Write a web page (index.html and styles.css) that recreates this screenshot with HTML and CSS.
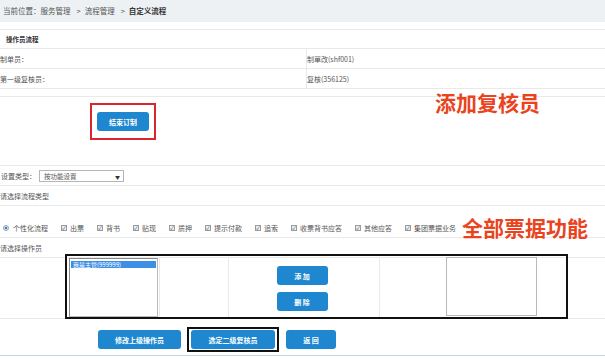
FILE: index.html
```html
<!DOCTYPE html>
<html lang="zh-CN">
<head>
    <meta charset="UTF-8">
    <title>自定义流程</title>
    <link rel="stylesheet" href="styles.css">
</head>
<body>
    <div class="page">
        <div class="crumb">当前位置：服务管理<span class="sep">&gt;</span>流程管理<span class="sep">&gt;</span><b>自定义流程</b></div>
        <div class="spacer"></div>

        <div class="row title"><b>操作员流程</b></div>
        <div class="row pair">
            <div class="cell left">制单员：</div>
            <div class="cell">制單改(shf001)</div>
        </div>
        <div class="row pair">
            <div class="cell left">第一级复核员：</div>
            <div class="cell">复核(356125)</div>
        </div>
        <div class="gap"></div>

        <div class="row btn-area">
            <span class="red-box"><a class="btn end-btn" href="#">结束订制</a></span>
            <span class="note note-add">添加复核员</span>
        </div>

        <div class="row type-row">
            <span>设置类型：</span>
            <div class="fake-select">按功能设置<span class="arrow">▼</span></div>
        </div>
        <div class="row">请选择流程类型</div>
        <div class="row checks">
            <label><span class="radio"></span>个性化流程</label>
            <label><span class="cb">✓</span>出票</label>
            <label><span class="cb">✓</span>背书</label>
            <label><span class="cb">✓</span>贴现</label>
            <label><span class="cb">✓</span>质押</label>
            <label><span class="cb">✓</span>提示付款</label>
            <label><span class="cb">✓</span>追索</label>
            <label><span class="cb">✓</span>收票背书应答</label>
            <label><span class="cb">✓</span>其他应答</label>
            <label><span class="cb">✓</span>集团票据业务</label>
            <span class="note note-all">全部票据功能</span>
        </div>
        <div class="row">请选择操作员</div>

        <div class="row operators">
            <div class="op-cell first">
                <div class="listbox left-list">
                    <div class="opt selected">我是主管(999999)</div>
                </div>
            </div>
            <div class="op-cell"></div>
            <div class="op-cell buttons">
                <a class="btn small-btn" href="#">添 加</a>
                <a class="btn small-btn" href="#">删 除</a>
            </div>
            <div class="op-cell last">
                <div class="listbox right-list"></div>
            </div>
            <div class="black-box"></div>
        </div>

        <div class="row actions">
            <a class="btn wide-btn" href="#">修改上级操作员</a>
            <span class="black-wrap"><a class="btn wide-btn" href="#">选定二级复核员</a></span>
            <a class="btn back-btn" href="#">返 回</a>
        </div>
    </div>
</body>
</html>
```

FILE: styles.css
```css
:root {
    --line-color: #e9e9e9;
    --text-color: #555555;
    --btn-color: #1f87cf;
    --note-color: #e9441d;
}

* {
    margin: 0;
    padding: 0;
    box-sizing: border-box;
}

body {
    font-family: "Noto Sans CJK SC", "DejaVu Sans", sans-serif;
    font-size: 7px;
    color: var(--text-color);
    background-color: #ffffff;
    width: 605px;
    height: 359px;
    overflow: hidden;
}

.page {
    position: relative;
}

.crumb {
    height: 22px;
    line-height: 22px;
    padding-left: 3px;
    background-color: #eef1f4;
    font-size: 7.5px;
}

.crumb .sep {
    margin: 0 4px 0 6px;
}

.crumb b {
    color: #333;
}

.spacer {
    height: 8px;
    border-bottom: 1px solid var(--line-color);
}

.row {
    position: relative;
    display: flex;
    align-items: center;
    height: 20px;
    border-bottom: 1px solid var(--line-color);
}

.title {
    height: 19px;
    padding-left: 6px;
    font-size: 6.5px;
}

.title b {
    color: #333;
}

.pair {
    align-items: stretch;
}

.pair .cell {
    display: flex;
    align-items: center;
}

.pair .left {
    width: 307px;
    border-right: 1px solid var(--line-color);
}

.gap {
    height: 8px;
    border-bottom: 1px solid var(--line-color);
}

.btn {
    display: flex;
    align-items: center;
    justify-content: center;
    height: 19px;
    background-color: var(--btn-color);
    color: #ffffff;
    font-weight: bold;
    border-radius: 3px;
    text-decoration: none;
}

.btn-area {
    height: 69px;
    align-items: flex-start;
}

.red-box {
    display: block;
    margin: 6px 0 0 90px;
    padding: 7px 5px;
    border: 2px solid #d9262c;
}

.end-btn {
    width: 52px;
}

.note {
    position: absolute;
    color: var(--note-color);
    font-size: 21px;
    font-weight: bold;
    line-height: 22px;
    white-space: nowrap;
}

.note-add {
    left: 435px;
    top: -6px;
}

.note-all {
    left: 462px;
    top: 10px;
}

.type-row {
    padding-left: 1px;
}

.fake-select {
    position: relative;
    width: 85px;
    height: 12px;
    margin-left: 3px;
    padding-left: 4px;
    line-height: 11px;
    border: 1px solid #b5b5b5;
    background-color: #ffffff;
    font-size: 6.5px;
}

.fake-select .arrow {
    position: absolute;
    right: 3px;
    top: 0;
    font-size: 5px;
    color: #333;
}

.checks {
    height: 32px;
    padding: 12px 0 0 3px;
}

.checks label {
    display: flex;
    align-items: center;
    margin-right: 13px;
}

.radio {
    width: 6px;
    height: 6px;
    margin-right: 4px;
    border-radius: 50%;
    background: radial-gradient(circle, #2f7fd1 35%, #dfe6ee 45%);
    border: 1px solid #8aa3bd;
}

.cb {
    display: inline-flex;
    align-items: center;
    justify-content: center;
    width: 6px;
    height: 6px;
    margin-right: 3px;
    border: 1px solid #9a9a9a;
    background-color: #eceff3;
    font-size: 5px;
    line-height: 1;
    color: #444;
}

.operators {
    height: 61px;
    align-items: stretch;
}

.op-cell {
    border-right: 1px solid var(--line-color);
}

.op-cell.first {
    width: 160px;
    padding: 0 0 2px 69px;
}

.op-cell:nth-child(2) {
    width: 69px;
}

.op-cell.buttons {
    width: 151px;
    display: flex;
    flex-direction: column;
    align-items: center;
    gap: 7px;
    padding: 8px 4px 0 0;
}

.op-cell.last {
    flex: 1;
    border-right: none;
    padding-left: 66px;
}

.small-btn {
    width: 51px;
}

.listbox {
    height: 59px;
    border: 1px solid #b8b8b8;
    background-color: #ffffff;
}

.left-list {
    width: 89px;
    border-left-color: #888;
    border-top-color: #888;
    padding: 2px 1px;
}

.right-list {
    width: 91px;
    margin-top: -1px;
}

.opt.selected {
    height: 7px;
    line-height: 7px;
    font-size: 6px;
    padding-left: 2px;
    background-color: #3d8fe6;
    color: #ffffff;
}

.black-box {
    position: absolute;
    left: 65px;
    top: -4px;
    width: 503px;
    height: 65px;
    border: 2px solid #111;
}

.actions {
    height: 37px;
    padding: 11px 0 0 98px;
    align-items: flex-start;
    border-bottom-color: #c9d6e2;
}

.wide-btn {
    width: 83px;
}

.black-wrap {
    display: block;
    margin: -3px 7px 0 6px;
    padding: 1px 2px;
    border: 2px solid #111;
}

.black-wrap .wide-btn {
    width: 84px;
}

.back-btn {
    width: 50px;
}
```
